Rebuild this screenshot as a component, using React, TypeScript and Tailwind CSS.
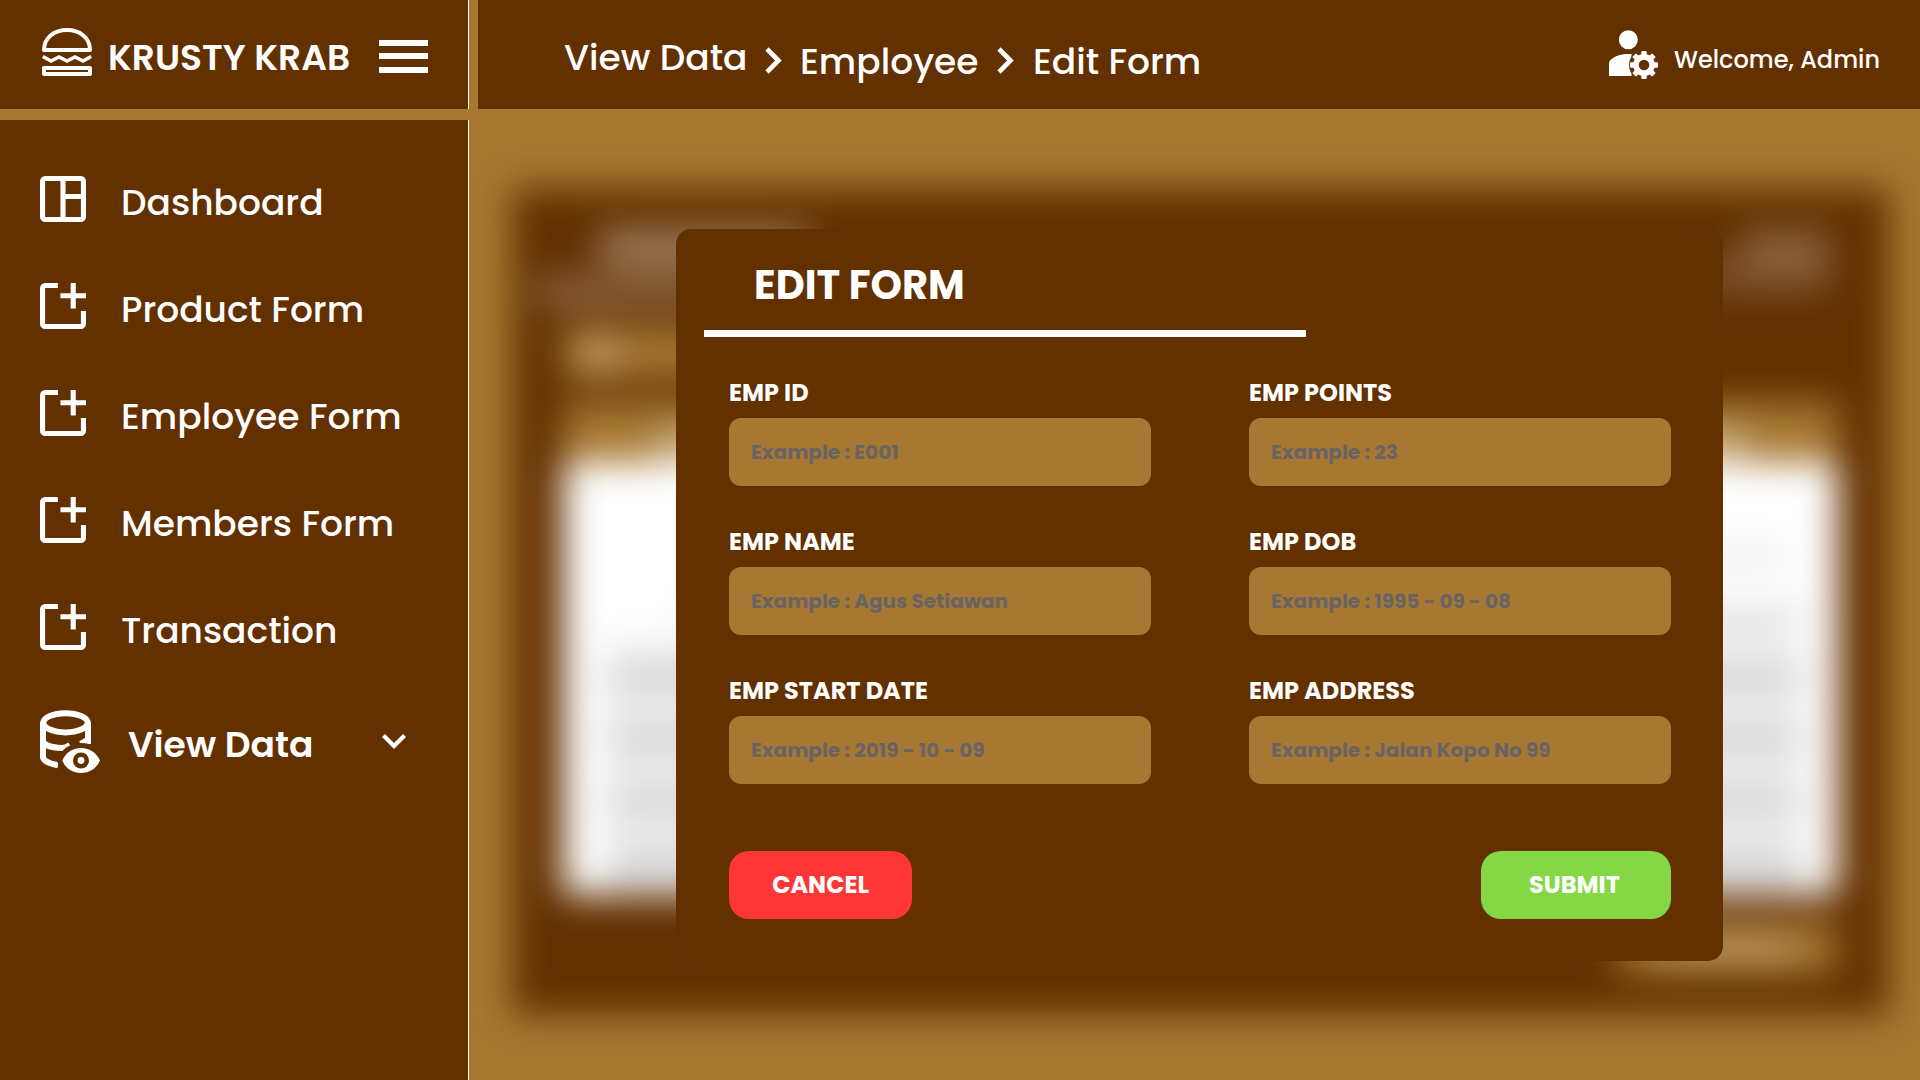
import type { ReactNode } from "react";

function BurgerIcon() {
  return (
    <svg viewBox="0 0 50 48" className="h-[48px] w-[50px] shrink-0" fill="none" stroke="#fff" strokeWidth="4">
      <path d="M2 22C2 10 12 2 25 2s23 8 23 20Z" strokeLinejoin="round" />
      <path d="M.8 28.5 9 33l8-4 8 4 8-4 8 4 8.200-4.500" strokeWidth="3.6" />
      <rect x="2" y="40" width="46" height="6" strokeLinejoin="round" />
    </svg>
  );
}

function DashboardIcon() {
  return (
    <svg viewBox="3 3 18 18" className="size-[46px] shrink-0" fill="#fff">
      <path d="M5 21q-.825 0-1.4125-.5875T3 19V5q0-.825.5875-1.4125T5 3h14q.825 0 1.4125.5875T21 5v14q0 .825-.5875 1.4125T19 21Zm0-2h6V5H5Zm8 0h6v-7h-6Zm0-9h6V5h-6Z" />
    </svg>
  );
}

function FormIcon() {
  return (
    <svg viewBox="3 3 18 18" className="size-[46px] shrink-0" fill="#fff">
      <path d="M5 21q-.825 0-1.4125-.5875T3 19V5q0-.825.5875-1.4125T5 3h5v2H5v14h14v-5h2v5q0 .825-.5875 1.4125T19 21Zm10-8V9h-4V7h4V3h2v4h4v2h-4v4Z" />
    </svg>
  );
}

function DatabaseViewIcon() {
  return (
    <svg viewBox="0 0 60 64" className="h-[64px] w-[60px] shrink-0" fill="none">
      <g stroke="#fff" strokeWidth="6">
        <ellipse cx="25.500" cy="12.800" rx="22.200" ry="9.600" />
        <path d="M3 12v35c0 3.500 6 6.500 15 8.200" />
        <path d="M3 31c1 4 8 6.800 19 7 4 0 5-1 8-3" />
        <path d="M48 12v22" />
        <path d="M48 27c-1 3-3 4-8 6" strokeWidth="4" />
      </g>
      <path d="M41 38c9 0 15.500 5 19 12.500C56.500 58 50 63 41 63s-15.500-5-18.700-12.500C25.500 43 32 38 41 38Z" stroke="#633000" strokeWidth="10" />
      <path d="M41 38c9 0 15.500 5 19 12.500C56.500 58 50 63 41 63s-15.500-5-18.700-12.500C25.500 43 32 38 41 38Z" fill="#fff" />
      <circle cx="41" cy="50.500" r="8" fill="#633000" />
      <circle cx="41" cy="50.500" r="3.400" fill="#fff" />
    </svg>
  );
}

function UserGearIcon() {
  return (
    <svg viewBox="0 0 49 49" className="size-[49px] shrink-0" fill="#fff">
      <circle cx="19.300" cy="9.700" r="9.500" />
      <path d="M0 46V34c0-3 1.500-4.500 4-6 4-2.600 9-4 15-4h3.500v22Z" />
      <circle cx="35" cy="35" r="15" fill="#633000" />
      {[0, 45, 90, 135, 180, 225, 270, 315].map((angle) => (
        <rect key={angle} x="32.300" y="21" width="5.400" height="6" rx="1" transform={`rotate(${angle} 35 35)`} />
      ))}
      <circle cx="35" cy="35" r="8.100" fill="none" stroke="#fff" strokeWidth="5.600" />
    </svg>
  );
}

function Crumb() {
  return (
    <svg viewBox="0 0 17 27" className="mt-[47px] h-[27px] w-[17px] shrink-0" fill="none" stroke="#fff" strokeWidth="4.600">
      <path d="M2 2l11.500 11.500L2 25" />
    </svg>
  );
}

function NavItem({ icon, label }: { icon: ReactNode; label: string }) {
  return (
    <a className="flex h-[46px] items-center gap-[35px]">
      {icon}
      <span className="pt-[7px] text-[36px] leading-[46px] font-medium">{label}</span>
    </a>
  );
}

function Field({ label, hint }: { label: string; hint: string }) {
  return (
    <label className="flex flex-col gap-[13px]">
      <span className="text-[24px] leading-6 font-bold whitespace-nowrap">{label}</span>
      <input
        placeholder={hint}
        className="h-[68px] w-full rounded-[12px] bg-[#a77832] pl-[22px] text-[20px] font-bold placeholder:text-[#696464] placeholder:opacity-100"
      />
    </label>
  );
}

function BlurredTable() {
  return (
    <section
      aria-hidden="true"
      className="mt-[79px] ml-[43px] flex h-[827px] w-[1377px] flex-col bg-[#633000] pt-[41px] blur-[18px] [grid-area:1/1]"
    >
      <div className="flex h-[80px] justify-between">
        <div className="flex flex-col gap-[10px]">
          <div className="ml-[88px] h-[38px] w-[208px] bg-white/38" />
          <div className="ml-[23px] h-[34px] w-[300px] bg-white/24" />
        </div>
        <div className="mr-[60px] flex flex-col items-end pt-[2px]">
          <div className="h-[34px] w-[88px] bg-white/25" />
          <div className="h-[25px] w-[150px] bg-white/20" />
        </div>
      </div>
      <div className="mt-[20px] ml-[51px] flex h-[48px] w-[400px] items-center bg-[#a77832] pl-[16px]">
        <div className="size-[38px] bg-white/28" />
      </div>
      <div className="mt-[25px] ml-[51px] flex h-[60px] w-[1275px] items-center justify-center bg-[#a77832]">
        <div className="mt-6 h-[36px] w-[1090px] bg-white/35" />
      </div>
      <div className="ml-[51px] flex h-[433px] w-[1275px] flex-col items-end bg-white pr-[38px]">
        <div className="mt-[86px] mr-[15px] h-[18px] w-[1090px] bg-black/8" />
        <div className="mt-[44px] h-[18px] w-[1110px] bg-black/18" />
        <div className="mt-[14px] flex w-[1193px] flex-1 flex-col gap-[48px] bg-black/7 pt-[28px]">
          <div className="h-[14px] bg-black/20" />
          <div className="h-[14px] bg-black/20" />
          <div className="h-[14px] bg-black/20" />
          <div className="h-[14px] bg-black/20" />
        </div>
      </div>
      <div className="mt-[28px] ml-[1106px] flex h-[50px] w-[218px] items-center justify-center bg-[#a77832]">
        <div className="h-[26px] w-[130px] bg-white/26" />
      </div>
    </section>
  );
}

export default function App() {
  return (
    <div className="flex h-[1080px] w-[1920px] overflow-hidden bg-[#a77832] text-white [font-family:Poppins,Inter,sans-serif] [font-feature-settings:'cv11']">
      <aside className="relative z-10 flex w-[469px] shrink-0 flex-col gap-[11px]">
        <div className="flex h-[109px] items-start border-r border-white bg-[#633000] pl-[42px]">
          <div className="pt-[28px]">
            <BurgerIcon />
          </div>
          <span className="mt-[38px] ml-[16px] w-[271px] text-[36px] leading-[40px] font-semibold whitespace-nowrap">
            KRUSTY KRAB
          </span>
          <button className="mt-[40px] flex w-[49px] flex-col gap-[7.600px]">
            <span className="h-[5.800px] bg-white" />
            <span className="h-[5.800px] bg-white" />
            <span className="h-[5.800px] bg-white" />
          </button>
        </div>
        <nav className="flex flex-1 flex-col gap-[61px] border-r border-white bg-[#633000] pt-[56px] pl-[40px]">
          <NavItem icon={<DashboardIcon />} label="Dashboard" />
          <NavItem icon={<FormIcon />} label="Product Form" />
          <NavItem icon={<FormIcon />} label="Employee Form" />
          <NavItem icon={<FormIcon />} label="Members Form" />
          <NavItem icon={<FormIcon />} label="Transaction" />
          <a className="-mt-px flex h-[64px] items-center">
            <DatabaseViewIcon />
            <span className="ml-[28px] w-[254px] pt-[6px] text-[36px] leading-[46px] font-semibold">View Data</span>
            <svg viewBox="0 0 24 15" className="mb-[2px] h-[15px] w-[24px]" fill="none" stroke="#fff" strokeWidth="4.200">
              <path d="M1.500 1.500 12 12 22.500 1.500" />
            </svg>
          </a>
        </nav>
      </aside>

      <div className="flex flex-1 flex-col">
        <header className="ml-[9px] flex h-[109px] items-start bg-[#633000] pr-[40px] pl-[86px] text-[36px] leading-[42px] font-medium whitespace-nowrap">
          <span className="mt-[37px] w-[201px]">View Data</span>
          <Crumb />
          <span className="mt-[41px] ml-[18px] w-[197px]">Employee</span>
          <Crumb />
          <span className="mt-[41px] ml-[19px]">Edit Form</span>
          <div className="ml-auto flex gap-[16px] pt-[30px]">
            <UserGearIcon />
            <span className="pt-[15px] text-[24px] leading-[30px]">Welcome, Admin</span>
          </div>
        </header>

        <main className="grid flex-1 grid-cols-1 items-start justify-items-start">
          <BlurredTable />
          <form className="z-10 mt-[120px] ml-[207px] h-[732px] w-[1047px] rounded-[15px] bg-[#633000] pt-[36px] [grid-area:1/1]">
            <h1 className="ml-[78px] text-[40px] leading-10 font-bold">EDIT FORM</h1>
            <div className="mt-[25px] ml-[28px] h-[7px] w-[602px] bg-white" />
            <div className="mt-[44px] ml-[53px] grid w-[942px] grid-cols-2 gap-x-[98px] gap-y-[44px]">
              <Field label="EMP ID" hint="Example : E001" />
              <Field label="EMP POINTS" hint="Example : 23" />
              <Field label="EMP NAME" hint="Example : Agus Setiawan" />
              <Field label="EMP DOB" hint="Example : 1995 - 09 - 08" />
              <Field label="EMP START DATE" hint="Example : 2019 - 10 - 09" />
              <Field label="EMP ADDRESS" hint="Example : Jalan Kopo No 99" />
            </div>
            <div className="mt-[67px] ml-[53px] flex w-[942px] justify-between text-[24px] leading-6 font-bold">
              <button type="button" className="h-[68px] w-[183px] rounded-[20px] bg-[#fe3636]">
                CANCEL
              </button>
              <button type="button" className="h-[68px] w-[190px] rounded-[20px] bg-[#84d846] pr-[3px]">
                SUBMIT
              </button>
            </div>
          </form>
        </main>
      </div>
    </div>
  );
}
